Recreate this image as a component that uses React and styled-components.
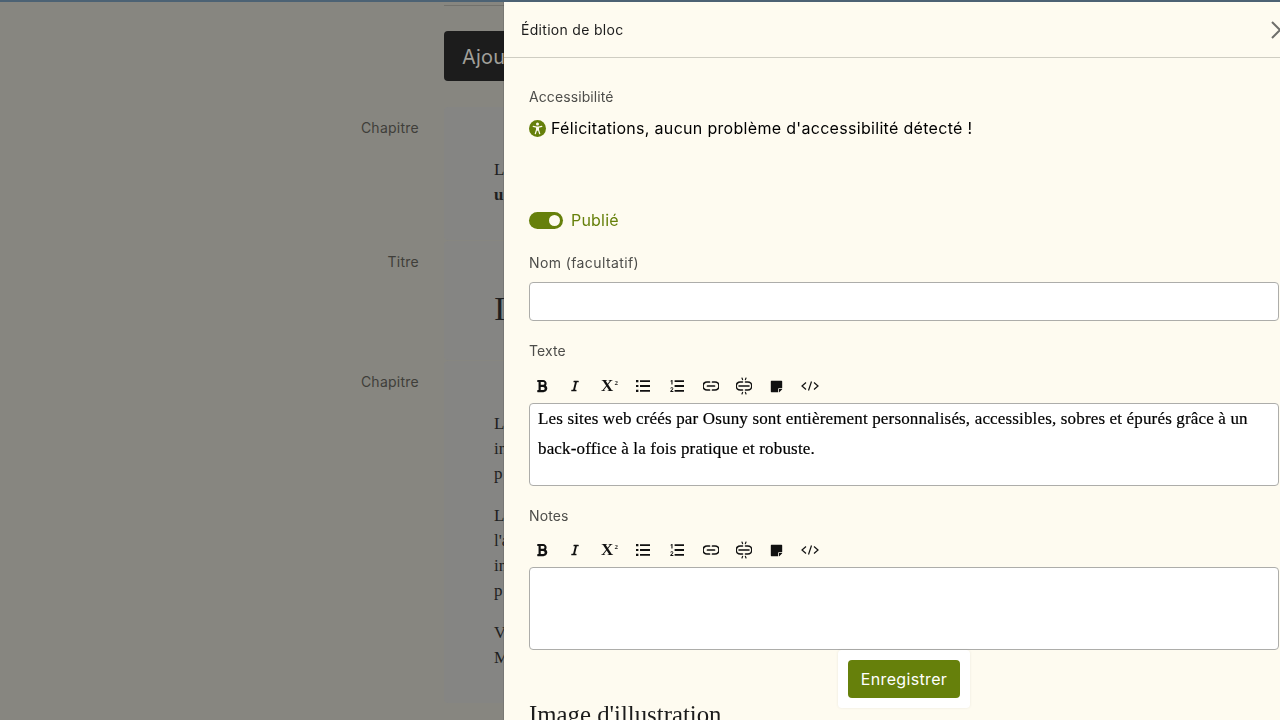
import React from 'react';
import styled, { createGlobalStyle } from 'styled-components';
import { FaBold, FaItalic, FaStickyNote } from 'react-icons/fa';

const GlobalStyle = createGlobalStyle`
    html, body {
        margin: 0;
        padding: 0;
        height: 720px;
        overflow: hidden;
        background: #878680;
    }
    * { box-sizing: border-box; }
`;

const sans = `Inter, 'Noto Sans', sans-serif`;
const serif = `'Liberation Serif', serif`;

const Page = styled.div`
    height: 720px;
    overflow: hidden;
    border-top: 2px solid #4c6274;
    background: #878680;
    font-family: ${sans};
`;

const Backdrop = styled.div`
    margin-top: 3px;
    display: grid;
    grid-template-columns: 420px 60px;
    column-gap: 24px;
`;

const TopRule = styled.div`
    grid-column: 2;
    height: 1px;
    background: #72716c;
`;

const AddButton = styled.div`
    grid-column: 2;
    margin-top: 25px;
    margin-bottom: 26px;
    height: 50px;
    padding: 2px 0 0 18px;
    display: flex;
    align-items: center;
    white-space: nowrap;
    background: #1c1c1c;
    border-radius: 4px 0 0 4px;
    color: #a09f99;
    font-size: 20px;
    letter-spacing: 0.2px;
`;

const BlockLabel = styled.div`
    grid-column: 1;
    height: ${(p) => p.$height}px;
    margin-bottom: 1px;
    text-align: right;
    padding: 12px 1px 0 0;
    color: #3f3e3a;
    font-size: 14px;
    line-height: 18px;
    letter-spacing: 0.25px;
`;

const BlockCard = styled.div`
    grid-column: 2;
    height: ${(p) => p.$height}px;
    margin-bottom: 1px;
    background: #858583;
    border-radius: 4px 0 0 4px;
    padding: ${(p) => p.$top}px 0 0 50px;
    color: #1f1f1f;
    font-family: ${serif};
    font-size: 17px;
    line-height: 25px;
    white-space: nowrap;
`;

const BlockPara = styled.p`
    margin: 0 0 17px;
`;

const BlockTitle = styled.div`
    font-size: 34px;
    line-height: 40px;
`;

const Panel = styled.aside`
    position: fixed;
    top: 2px;
    left: 504px;
    width: 800px;
    height: 718px;
    overflow: hidden;
    background: #fefbf0;
    box-shadow: -1px 0 0 rgba(0, 0, 0, 0.1);
    font-family: ${sans};
`;

const PanelHeader = styled.header`
    height: 56px;
    display: flex;
    align-items: center;
    justify-content: space-between;
    padding: 0 15px 0 17px;
    border-bottom: 1px solid #cfcdc2;
    color: #1c1c1c;
    font-size: 14px;
    letter-spacing: 0.3px;
`;

const CloseIcon = styled.svg`
    width: 18px;
    height: 18px;
    stroke: #6e6e6a;
    stroke-width: 2;
    fill: none;
`;

const PanelBody = styled.div`
    padding: 30px 25px 0;
`;

const FieldLabel = styled.div`
    color: #4d4d4a;
    font-size: 14px;
    line-height: 18px;
    letter-spacing: 0.1px;
`;

const A11yMessage = styled.div`
    margin-top: 11px;
    display: flex;
    align-items: center;
    gap: 5px;
    color: #000;
    font-size: 16px;
    line-height: 22px;
    letter-spacing: 0.31px;
`;

const PublishRow = styled.div`
    margin-top: 70px;
    display: flex;
    align-items: center;
    gap: 8px;
    color: #66800b;
    font-size: 16px;
    line-height: 22px;
    letter-spacing: 0.2px;
`;

const Toggle = styled.span`
    position: relative;
    width: 34px;
    height: 17px;
    border-radius: 9px;
    background: #66800b;
    &::after {
        content: '';
        position: absolute;
        top: 3px;
        right: 3px;
        width: 11px;
        height: 11px;
        border-radius: 50%;
        background: #fefbf0;
    }
`;

const NameLabel = styled(FieldLabel)`
    margin-top: 23px;
    letter-spacing: 0.4px;
`;

const TextInput = styled.div`
    margin-top: 10px;
    height: 39px;
    background: #fff;
    border: 1px solid #adadaa;
    border-radius: 4px;
`;

const EditorLabel = styled(FieldLabel)`
    margin-top: ${(p) => p.$top}px;
`;

const Toolbar = styled.div`
    margin: ${(p) => p.$top}px 0 0 -4px;
    height: 24px;
    display: flex;
    align-items: center;
    color: #111;
`;

const ToolButton = styled.span`
    width: ${(p) => p.$w}px;
    display: flex;
    justify-content: center;
    align-items: center;
    font-size: ${(p) => p.$size || 14}px;
`;

const SuperMark = styled.span`
    display: flex;
    align-items: flex-start;
    font-family: ${serif};
    font-weight: 700;
    font-size: 17px;
    line-height: 14px;
    sup {
        font-size: 7px;
        line-height: 8px;
        margin: 0 0 0 1px;
        vertical-align: baseline;
    }
`;

const EditorBox = styled.div`
    margin-top: 5px;
    height: 83px;
    padding: 0 8px;
    background: #fff;
    border: 1px solid #adadaa;
    border-radius: 4px;
    color: #000;
    font-family: ${serif};
    font-size: 17px;
    line-height: 30px;
    letter-spacing: 0.16px;
    -webkit-text-stroke: 0.2px #000;
`;

const SectionTitle = styled.h2`
    margin: 50px 0 0;
    color: #1c1c1c;
    font-family: ${serif};
    font-size: 24.8px;
    line-height: 30px;
    font-weight: 400;
`;

const SaveBar = styled.div`
    position: absolute;
    left: 334px;
    bottom: 12px;
    width: 132px;
    height: 58px;
    padding: 10px;
    background: #fff;
    border-radius: 4px;
    box-shadow: 0 0 3px rgba(0, 0, 0, 0.08);
`;

const SaveButton = styled.button`
    width: 112px;
    height: 38px;
    border: 0;
    border-radius: 4px;
    background: #66800b;
    color: #fff;
    font-family: ${sans};
    font-size: 16px;
    letter-spacing: 0.35px;
`;

const AccessIcon = () => (
    <svg width="17" height="17" viewBox="0 0 17 17">
        <circle cx="8.5" cy="8.5" r="8.5" fill="#66800b" />
        <circle cx="8.5" cy="3.900" r="1.500" fill="#fefbf0" />
        <path d="M4.200 6.300l3.300.8h2l3.300-.8M7.600 7.200v2.800M9.400 7.200v2.800M7.500 10l-1.200 3.700M9.500 10l1.200 3.700M8.500 7.200v3" fill="none" stroke="#fefbf0" strokeWidth="1.200" strokeLinecap="round" strokeLinejoin="round" />
    </svg>
);

const BulletIcon = () => (
    <svg width="14" height="12" viewBox="0 0 14 12" fill="currentColor">
        <path d="M0 0h2.400v2.200H0zM0 4.900h2.400v2.200H0zM0 9.800h2.400V12H0zM4 .2h10v1.800H4zM4 5.100h10v1.800H4zM4 10h10v1.800H4z" />
    </svg>
);

const OrderedIcon = () => (
    <svg width="14" height="12" viewBox="0 0 14 12" fill="currentColor">
        <path d="M.6.8 1.800 0h.7v4.600H1.400V1.300L.6 1.800zM.3 12v-.9l2-2c.4-.5.1-1-.4-1-.4 0-.7.2-.9.6l-.7-.5c.3-.7.9-1 1.600-1 1.300 0 1.900 1.200 1 2.200L1.700 11.100h1.700v.9zM4.600.3H14v1.800H4.600zM4.600 5.100H14v1.800H4.600zM4.600 9.900H14v1.800H4.600z" />
    </svg>
);

const LinkIcon = () => (
    <svg width="16" height="10" viewBox="0 0 16 10" fill="none" stroke="currentColor" strokeWidth="1.700" strokeLinecap="round">
        <path d="M6.500 1H4a4 4 0 0 0 0 8h2.500M9.500 1H12a4 4 0 0 1 0 8H9.500M4.500 5h7" />
    </svg>
);

const UnlinkIcon = () => (
    <svg width="16" height="18" viewBox="0 0 16 18" fill="none" stroke="currentColor" strokeWidth="1.600" strokeLinecap="round">
        <path d="M6.500 5H4.200a4 4 0 0 0 0 8h2.300M9.500 5h2.300a4 4 0 0 1 0 8H9.500M3 9h10" />
        <path d="M6 1l.6 1.600M10 1l-.6 1.600M6 17l.6-1.600M10 17l-.6-1.600" strokeWidth="1.200" />
    </svg>
);

const CodeIcon = () => (
    <svg width="18" height="10" viewBox="0 0 18 10" fill="none" stroke="currentColor" strokeWidth="1.200">
        <path d="M5 1.500 1 5l4 3.500M13 1.500 17 5l-4 3.500M10.500 .5l-3 9" />
    </svg>
);

const EditorToolbar = ({ top }) => (
    <Toolbar $top={top}>
        <ToolButton $w={33} $size={14}><FaBold /></ToolButton>
        <ToolButton $w={34} $size={12}><FaItalic /></ToolButton>
        <ToolButton $w={35}><SuperMark>X<sup>2</sup></SuperMark></ToolButton>
        <ToolButton $w={32}><BulletIcon /></ToolButton>
        <ToolButton $w={36}><OrderedIcon /></ToolButton>
        <ToolButton $w={32}><LinkIcon /></ToolButton>
        <ToolButton $w={34}><UnlinkIcon /></ToolButton>
        <ToolButton $w={31} $size={13}><FaStickyNote /></ToolButton>
        <ToolButton $w={36}><CodeIcon /></ToolButton>
    </Toolbar>
);

export default function App() {
    return (
        <Page>
            <GlobalStyle />
            <Backdrop>
                <TopRule />
                <AddButton>Ajou</AddButton>
                <BlockLabel $height={133}>Chapitre</BlockLabel>
                <BlockCard $height={133} $top={50}>
                    <BlockPara>L<br /><b>u</b></BlockPara>
                </BlockCard>
                <BlockLabel $height={119}>Titre</BlockLabel>
                <BlockCard $height={119} $top={48}>
                    <BlockTitle>I</BlockTitle>
                </BlockCard>
                <BlockLabel $height={342}>Chapitre</BlockLabel>
                <BlockCard $height={342} $top={50}>
                    <BlockPara>L<br />in<br />p</BlockPara>
                    <BlockPara>L<br />l'a<br />in<br />p</BlockPara>
                    <BlockPara>V<br />M</BlockPara>
                </BlockCard>
            </Backdrop>
            <Panel>
                <PanelHeader>
                    Édition de bloc
                    <CloseIcon viewBox="0 0 18 18"><path d="M1 1l16 16M17 1L1 17" /></CloseIcon>
                </PanelHeader>
                <PanelBody>
                    <FieldLabel>Accessibilité</FieldLabel>
                    <A11yMessage>
                        <AccessIcon />
                        Félicitations, aucun problème d'accessibilité détecté !
                    </A11yMessage>
                    <PublishRow><Toggle />Publié</PublishRow>
                    <NameLabel>Nom (facultatif)</NameLabel>
                    <TextInput />
                    <EditorLabel $top={21}>Texte</EditorLabel>
                    <EditorToolbar top={14} />
                    <EditorBox>
                        Les sites web créés par Osuny sont entièrement personnalisés, accessibles, sobres et épurés grâce à un back-office à la fois pratique et robuste.
                    </EditorBox>
                    <EditorLabel $top={21}>Notes</EditorLabel>
                    <EditorToolbar top={13} />
                    <EditorBox />
                    <SectionTitle>Image d'illustration</SectionTitle>
                </PanelBody>
                <SaveBar><SaveButton>Enregistrer</SaveButton></SaveBar>
            </Panel>
        </Page>
    );
}
